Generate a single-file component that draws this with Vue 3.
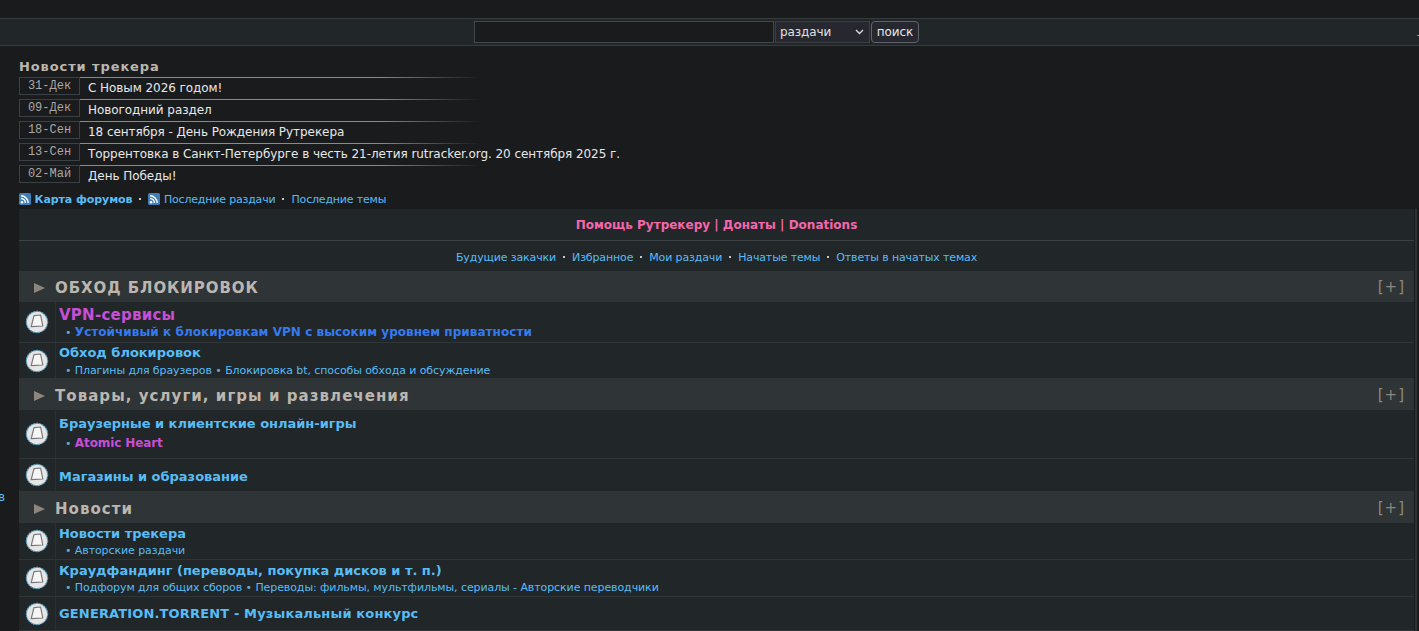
<script setup>
const news = [
  ['31-Дек', 'С Новым 2026 годом!'],
  ['09-Дек', 'Новогодний раздел'],
  ['18-Сен', '18 сентября - День Рождения Рутрекера'],
  ['13-Сен', 'Торрентовка в Санкт-Петербурге в честь 21-летия rutracker.org. 20 сентября 2025 г.'],
  ['02-Май', 'День Победы!'],
]
const links = ['Будущие закачки', 'Избранное', 'Мои раздачи', 'Начатые темы', 'Ответы в начатых темах']
const cats = [
  { title: 'ОБХОД БЛОКИРОВОК', spaced: true, rows: [
    { cls: 'r41 p5 g1', name: 'VPN-сервисы', nameCls: 'vpn', subs: [{ t: 'Устойчивый к блокировкам VPN с высоким уровнем приватности', c: 'strong-blue' }] },
    { cls: 'r36 p2 g2', name: 'Обход блокировок', subs: [{ t: 'Плагины для браузеров' }, { t: 'Блокировка bt, способы обхода и обсуждение' }] },
  ]},
  { title: 'Товары, услуги, игры и развлечения', rows: [
    { cls: 'r49 p6 g3', name: 'Браузерные и клиентские онлайн-игры', subs: [{ t: 'Atomic Heart', c: 'strong-purple' }] },
    { cls: 'r33 p10', name: 'Магазины и образование', subs: [] },
  ]},
  { title: 'Новости', rows: [
    { cls: 'r37 p3 g1', name: 'Новости трекера', subs: [{ t: 'Авторские раздачи' }] },
    { cls: 'r37 p3 g1', name: 'Краудфандинг (переводы, покупка дисков и т. п.)', subs: [{ t: 'Подфорум для общих сборов' }, { t: 'Переводы: фильмы, мультфильмы, сериалы - Авторские переводчики' }] },
    { cls: 'r34 p9', name: 'GENERATION.TORRENT - Музыкальный конкурс', nameCls: 'gen', subs: [] },
  ]},
]
</script>

<template>
  <div class="page">
    <div class="searchbar">
      <input class="q" type="text" />
      <div class="sel">раздачи<svg width="9" height="6" viewBox="0 0 9 6"><path d="M1 1l3.5 3.5L8 1" fill="none" stroke="#d8d8d8" stroke-width="1.4"/></svg></div>
      <button class="go">поиск</button>
      <span class="edge"></span>
    </div>

    <div class="main">
      <div class="side"><span class="side-letter">в</span></div>
      <div class="content">
        <h3 class="news-title">Новости трекера</h3>
        <div class="news">
          <div class="news-row" v-for="n in news" :key="n[0]">
            <span class="date">{{ n[0] }}</span>
            <span class="ntext">{{ n[1] }}</span>
          </div>
        </div>
        <div class="feed">
          <svg class="rss" viewBox="0 0 12 12"><rect width="12" height="12" rx="1.5" fill="#3f7fb5"/><circle cx="3" cy="9.2" r="1.3" fill="#fff"/><path d="M2 5.6a4.4 4.4 0 0 1 4.4 4.4M2 2.8A7.2 7.2 0 0 1 9.2 10" fill="none" stroke="#fff" stroke-width="1.5"/></svg>
          <a class="b">Карта форумов</a><i class="dot"></i>
          <svg class="rss" viewBox="0 0 12 12"><rect width="12" height="12" rx="1.5" fill="#3f7fb5"/><circle cx="3" cy="9.2" r="1.3" fill="#fff"/><path d="M2 5.6a4.4 4.4 0 0 1 4.4 4.4M2 2.8A7.2 7.2 0 0 1 9.2 10" fill="none" stroke="#fff" stroke-width="1.5"/></svg>
          <a>Последние раздачи</a><i class="dot"></i>
          <a>Последние темы</a>
        </div>

        <div class="board">
          <div class="help">Помощь Рутрекеру | Донаты | Donations</div>
          <div class="quick">
            <template v-for="(l, i) in links" :key="l">
              <i v-if="i" class="dot"></i><a>{{ l }}</a>
            </template>
          </div>
          <section v-for="c in cats" :key="c.title">
            <div class="cat">
              <span class="tri"></span>
              <span class="ctitle" :class="{ spaced: c.spaced }">{{ c.title }}</span>
              <span class="plus">[+]</span>
            </div>
            <div class="row" :class="r.cls" v-for="r in c.rows" :key="r.name">
              <div class="ico">
                <svg width="24" height="24" viewBox="0 0 24 24">
                  <circle cx="12" cy="12" r="10.6" fill="#e6e6e6" stroke="#62a7c6" stroke-width="1.2" stroke-dasharray="2 .7"/>
                  <path d="M9 5.6L15.6 5L17.8 16L6.2 16.6Z" fill="#f6f6f6" stroke="#787878" stroke-width="1.2" stroke-linejoin="round"/>
                </svg>
              </div>
              <div class="info">
                <a class="fname" :class="r.nameCls">{{ r.name }}</a>
                <div class="subs" v-if="r.subs.length">
                  <template v-for="s in r.subs" :key="s.t">
                    <span class="bull">•</span> <a :class="s.c">{{ s.t }}</a>{{ ' ' }}
                  </template>
                </div>
              </div>
            </div>
          </section>
        </div>
      </div>
    </div>
  </div>
</template>

<style>
html, body { margin: 0; height: 100%; background: #191b1d; overflow: hidden; }
</style>

<style scoped>
.page { height: 631px; overflow: hidden; background: #191b1d; font-family: "DejaVu Sans", Verdana, sans-serif; color: #e8e8e8; padding-top: 18px; box-sizing: border-box; }
a { color: #58bdf6; }
.searchbar { height: 26px; display: flex; align-items: center; justify-content: center; gap: 1px; background: #212628; border-top: 1px solid #363c3e; border-bottom: 1px solid #363c3e; padding-right: 26px; position: relative; }
.q { width: 300px; height: 22px; box-sizing: border-box; background: #191b1d; border: 1px solid #41474a; padding: 0; margin: 0; }
.sel { width: 95px; height: 22px; box-sizing: border-box; background: #26272f; border: 1px solid #3b3e45; font-size: 12px; letter-spacing: -.1px; padding-left: 4px; display: flex; align-items: center; justify-content: space-between; padding-right: 5px; color: #e0e0e0; }
.go { width: 48px; height: 22px; box-sizing: border-box; background: #26272f; border: 1px solid #60636c; border-radius: 4px; color: #e8e8e8; font: 12px "DejaVu Sans", sans-serif; letter-spacing: -.1px; padding: 0; }
.edge { position: absolute; right: 0; top: 16px; width: 2px; height: 1px; background: #4aa8e0; }
.main { display: flex; }
.side { width: 19px; position: relative; flex: none; }
.side-letter { position: absolute; left: -2px; top: 445px; font-size: 12px; line-height: 12px; color: #58bdf6; }
.content { flex: 1; min-width: 0; padding-top: 13px; padding-right: 4px; }
.news-title { margin: 0; height: 16px; font-size: 13px; line-height: 16px; font-weight: bold; letter-spacing: .9px; color: #bcb6ae; }
.news { margin-top: 2px; }
.news-row { display: flex; height: 22px; }
.date { flex: none; width: 61px; height: 18px; box-sizing: border-box; border: 1px solid #3a4044; font: 12px/16px "Liberation Mono", monospace; text-align: center; color: #a8a8a8; }
.ntext { width: 400px; white-space: nowrap; font-size: 12px; line-height: 23px; letter-spacing: -.06px; padding-left: 8px; color: #e8e8e8; background: linear-gradient(90deg, #8a8a8a 0, #8a8a8a 300px, #191b1d 400px) top left / 400px 1px no-repeat; }
.feed { display: flex; align-items: center; height: 14px; margin-top: 5px; font-size: 11px; letter-spacing: -.18px; }
.b { font-weight: bold; letter-spacing: -.08px; }
.rss { width: 12px; height: 12px; margin-right: 3.5px; }
.dot { display: inline-block; width: 2px; height: 2px; background: #c8c8c8; margin: 0 7px; vertical-align: middle; }
.board { margin-top: 3px; background: #212628; border-right: 1px solid #191b1d; box-shadow: 2px 0 0 #2c3133; }
.help { box-sizing: border-box; height: 32px; border-bottom: 1px solid #3b4042; text-align: center; font-size: 12px; line-height: 33px; font-weight: bold; color: #f766ac; }
.quick { height: 30px; display: flex; align-items: center; justify-content: center; font-size: 11px; letter-spacing: -.14px; padding-top: 2px; box-sizing: border-box; }
.cat { height: 31px; background: #2f3437; display: flex; align-items: center; padding-left: 15px; padding-top: 2px; box-sizing: border-box; position: relative; }
.tri { width: 0; height: 0; border-left: 11px solid #8d867c; border-top: 5px solid transparent; border-bottom: 5px solid transparent; margin-right: 10px; }
.ctitle { font-size: 15px; font-weight: bold; letter-spacing: 1.05px; color: #bcb6ae; }
.ctitle.spaced { letter-spacing: .93px; }
.plus { position: absolute; right: 9px; top: 7px; font-size: 15px; letter-spacing: 1px; color: #8d867c; }
.row { display: flex; border-bottom: 1px solid #2f3437; box-sizing: border-box; }
.r41 { height: 41px; } .r36 { height: 36px; } .r37 { height: 37px; } .r49 { height: 49px; } .r33 { height: 33px; } .r34 { height: 34px; }
.p2 .info { padding-top: 2px; } .p3 .info { padding-top: 3px; } .p5 .info { padding-top: 5px; } .p6 .info { padding-top: 6px; } .p9 .info { padding-top: 9px; } .p10 .info { padding-top: 10px; }
.g1 .subs { margin-top: 1px; } .g2 .subs { margin-top: 2px; } .g3 .subs { margin-top: 3px; }
.ico { width: 36px; flex: none; border-right: 1px solid #2a2f31; display: flex; align-items: center; justify-content: center; }
.info { padding-left: 3px; display: flex; flex-direction: column; min-width: 0; }
.fname { font-size: 13px; line-height: 16px; font-weight: bold; letter-spacing: -.02px; }
.vpn { color: #c74fd6; font-size: 15px; letter-spacing: .25px; }
.gen { letter-spacing: .15px; }
.subs { font-size: 11px; line-height: 16px; padding-left: 6px; color: #58bdf6; letter-spacing: -.09px; }
.bull { color: #6aa6c8; }
.strong-blue { color: #357bf0; font-weight: bold; font-size: 12px; letter-spacing: .05px; }
.strong-purple { color: #c74fd6; font-weight: bold; font-size: 12px; letter-spacing: -.1px; }
</style>
